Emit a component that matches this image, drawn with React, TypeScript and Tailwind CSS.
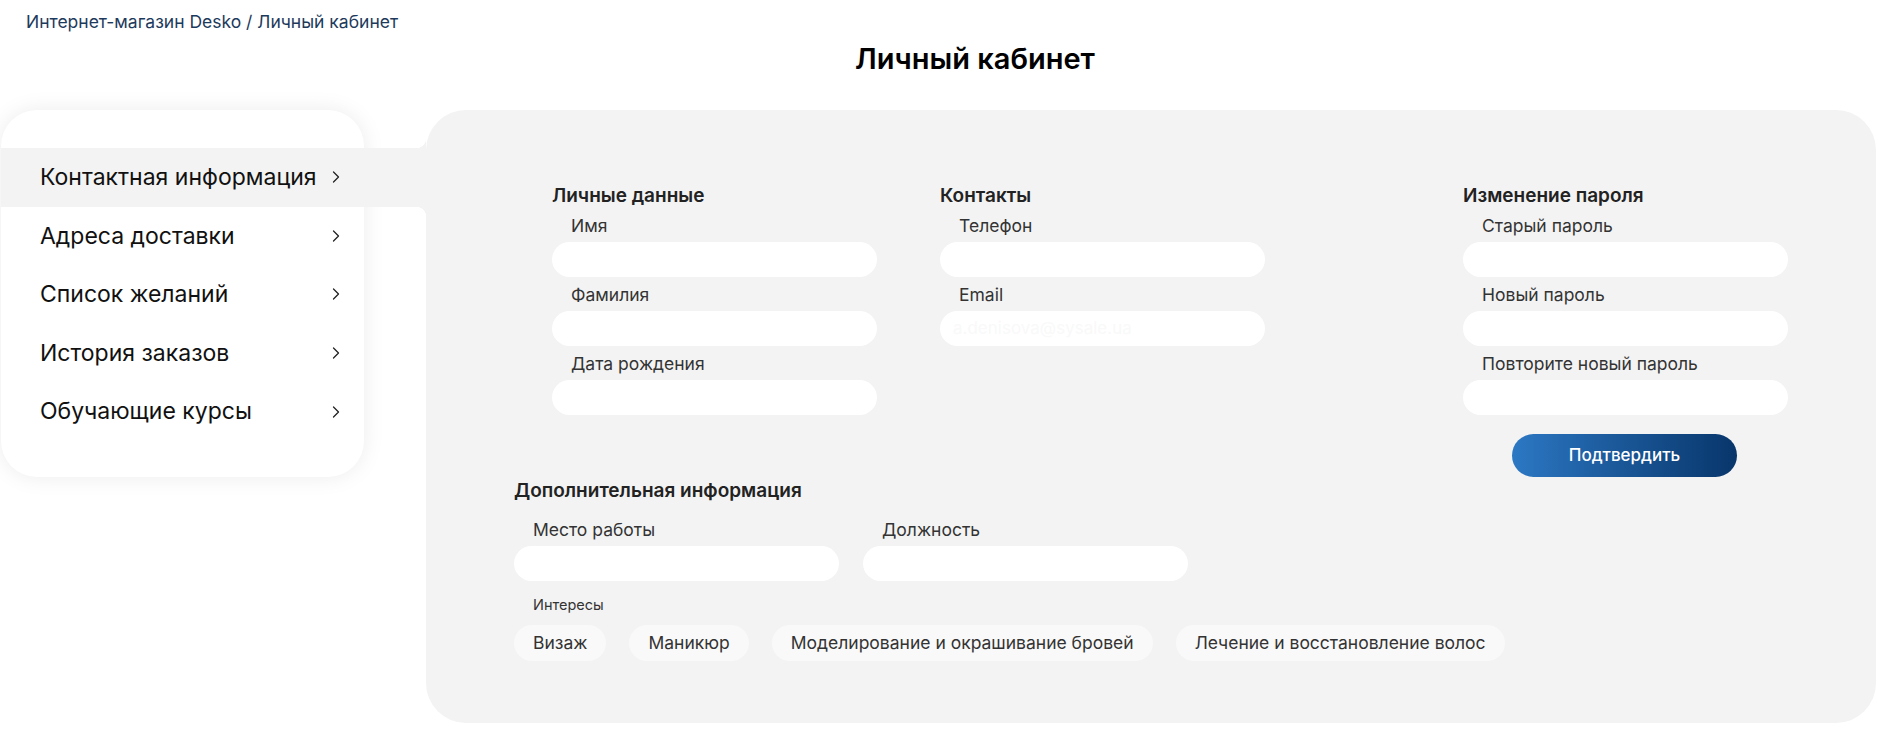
import React from 'react';
import { ChevronRight } from 'lucide-react';

const menu = [
  'Контактная информация',
  'Адреса доставки',
  'Список желаний',
  'История заказов',
  'Обучающие курсы',
];

const interests = [
  'Визаж',
  'Маникюр',
  'Моделирование и окрашивание бровей',
  'Лечение и восстановление волос',
];

interface FieldProps {
  label: string;
  value?: string;
}

const Field: React.FC<FieldProps> = ({ label, value }) => (
  <div className="flex flex-col">
    <span className="pl-[19px] text-[17.5px] leading-[22px] text-[#333]">{label}</span>
    <div className="mt-[5px] flex h-[35px] w-[325px] items-center rounded-full bg-white pl-[13px] text-[17px] text-[#f9f9f9]">
      {value}
    </div>
  </div>
);

const Heading: React.FC<{ children: React.ReactNode }> = ({ children }) => (
  <h3 className="text-[19px] leading-[24px] font-semibold text-[#222]">{children}</h3>
);

export default function App() {
  return (
    <div className="min-h-[741px] bg-white pt-[12px] text-[#222]" style={{ fontFamily: 'Inter, "Noto Sans", sans-serif' }}>
      <div className="pl-[26px] text-[17.5px] leading-[20px] text-[#1d3a5c]">
        Интернет-магазин Desko / Личный кабинет
      </div>
      <h1 className="mt-[9px] pl-[72px] text-center text-[29px] leading-[36px] font-semibold text-black">
        Личный кабинет
      </h1>

      <div className="mt-[33px] flex pr-[2px]">
        {/* Sidebar */}
        <aside className="relative z-10 ml-[1px] w-[363px] shrink-0 self-start rounded-[36px] bg-white pt-[38px] pb-[36px] shadow-[0_0_22px_rgba(0,0,0,0.08)]">
          {menu.map((item, i) => (
            <div
              key={item}
              className={`relative flex h-[58.6px] items-center justify-between pl-[39px] pr-[18px] text-[23px] text-[#111] ${
                i === 0 ? 'bg-[#f3f3f3] -mr-[62px] pr-[80px]' : ''
              }`}
            >
              <span>{item}</span>
              <ChevronRight size={20} strokeWidth={1.5} className="text-[#222]" />
              {i === 0 && (
                <>
                  <span className="absolute right-0 -top-[10px] h-[10px] w-[10px] bg-[radial-gradient(circle_at_0_0,transparent_10px,#f3f3f3_10.5px)]" />
                  <span className="absolute right-0 top-full h-[10px] w-[10px] bg-[radial-gradient(circle_at_0_100%,transparent_10px,#f3f3f3_10.5px)]" />
                </>
              )}
            </div>
          ))}
        </aside>

        {/* Main panel */}
        <main className="ml-[62px] flex-1 rounded-[40px] bg-[#f3f3f3] px-[88px] pt-[74px] pb-[62px]">
          <div className="flex pl-[38px]">
            <div className="flex flex-col gap-[7px]">
              <Heading>Личные данные</Heading>
              <div className="flex flex-col gap-[7px]">
                <Field label="Имя" />
                <Field label="Фамилия" />
                <Field label="Дата рождения" />
              </div>
            </div>
            <div className="ml-[63px] flex flex-col gap-[7px]">
              <Heading>Контакты</Heading>
              <div className="flex flex-col gap-[7px]">
                <Field label="Телефон" />
                <Field label="Email" value="a.denisova@sysale.ua" />
              </div>
            </div>
            <div className="ml-auto flex flex-col gap-[7px]">
              <Heading>Изменение пароля</Heading>
              <div className="flex flex-col gap-[7px]">
                <Field label="Старый пароль" />
                <Field label="Новый пароль" />
                <Field label="Повторите новый пароль" />
              </div>
              <button className="mt-[12px] ml-[49px] h-[43px] w-[225px] rounded-full bg-gradient-to-r from-[#2c78c4] to-[#08366b] text-[17px] font-medium text-white">
                Подтвердить
              </button>
            </div>
          </div>

          <div className="mt-[2px]">
            <Heading>Дополнительная информация</Heading>
            <div className="mt-[16px] flex gap-[24px]">
              <Field label="Место работы" />
              <Field label="Должность" />
            </div>
            <div className="mt-[15px] pl-[19px] text-[14.5px] leading-[18px] text-[#333]">Интересы</div>
            <div className="mt-[11px] flex gap-[23px]">
              {interests.map((t) => (
                <span
                  key={t}
                  className="flex h-[36px] items-center rounded-full bg-[#f9f9f9] px-[19px] text-[17.5px] text-[#333]"
                >
                  {t}
                </span>
              ))}
            </div>
          </div>
        </main>
      </div>
    </div>
  );
}
